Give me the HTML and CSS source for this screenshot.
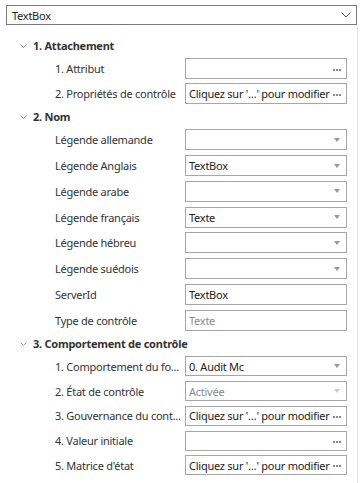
FILE: index.html
```html
<!DOCTYPE html>
<html>
<head>
    <meta charset="UTF-8">
    <title>Propriétés</title>
    <link rel="stylesheet" href="styles.css">
</head>
<body>
    <div class="picker">
        <span>TextBox</span>
        <svg width="10" height="6" viewBox="0 0 10 6"><polyline points="0.5,0.5 5,5 9.5,0.5" fill="none" stroke="#555" stroke-width="1"/></svg>
    </div>

    <div class="grid">
        <!-- 1. Attachement -->
        <div class="group-head">
            <svg class="caret" width="7" height="4" viewBox="0 0 7 4"><polyline points="0.5,0.5 3.5,3.5 6.5,0.5" fill="none" stroke="#999" stroke-width="1"/></svg>
            1. Attachement
        </div>
        <div class="group g1">
            <div class="row">
                <div class="label">1. Attribut</div>
                <div class="field"><span></span><i class="dots"></i></div>
            </div>
            <div class="row">
                <div class="label">2. Propriétés de contrôle</div>
                <div class="field"><span>Cliquez sur '…' pour modifier</span><i class="dots"></i></div>
            </div>
        </div>

        <!-- 2. Nom -->
        <div class="group-head">
            <svg class="caret" width="7" height="4" viewBox="0 0 7 4"><polyline points="0.5,0.5 3.5,3.5 6.5,0.5" fill="none" stroke="#999" stroke-width="1"/></svg>
            2. Nom
        </div>
        <div class="group g2">
            <div class="row">
                <div class="label">Légende allemande</div>
                <div class="field"><span></span><i class="arrow"></i></div>
            </div>
            <div class="row">
                <div class="label">Légende Anglais</div>
                <div class="field"><span>TextBox</span><i class="arrow"></i></div>
            </div>
            <div class="row">
                <div class="label">Légende arabe</div>
                <div class="field"><span></span><i class="arrow"></i></div>
            </div>
            <div class="row">
                <div class="label">Légende français</div>
                <div class="field"><span>Texte</span><i class="arrow"></i></div>
            </div>
            <div class="row">
                <div class="label">Légende hébreu</div>
                <div class="field"><span></span><i class="arrow"></i></div>
            </div>
            <div class="row">
                <div class="label">Légende suédois</div>
                <div class="field"><span></span><i class="arrow"></i></div>
            </div>
            <div class="row">
                <div class="label">ServerId</div>
                <div class="field"><span>TextBox</span></div>
            </div>
            <div class="row">
                <div class="label">Type de contrôle</div>
                <div class="field disabled"><span>Texte</span></div>
            </div>
        </div>

        <!-- 3. Comportement de contrôle -->
        <div class="group-head">
            <svg class="caret" width="7" height="4" viewBox="0 0 7 4"><polyline points="0.5,0.5 3.5,3.5 6.5,0.5" fill="none" stroke="#999" stroke-width="1"/></svg>
            3. Comportement de contrôle
        </div>
        <div class="group g3">
            <div class="row">
                <div class="label">1. Comportement du fo...</div>
                <div class="field"><span>0. Audit Mc</span><i class="arrow"></i></div>
            </div>
            <div class="row">
                <div class="label">2. État de contrôle</div>
                <div class="field disabled"><span>Activée</span><i class="arrow"></i></div>
            </div>
            <div class="row">
                <div class="label">3. Gouvernance du cont...</div>
                <div class="field"><span>Cliquez sur '…' pour modifier</span><i class="dots"></i></div>
            </div>
            <div class="row">
                <div class="label">4. Valeur initiale</div>
                <div class="field"><span></span><i class="dots"></i></div>
            </div>
            <div class="row">
                <div class="label">5. Matrice d'état</div>
                <div class="field"><span>Cliquez sur '…' pour modifier</span><i class="dots"></i></div>
            </div>
        </div>
    </div>
</body>
</html>
```

FILE: styles.css
```css
html,
body {
    margin: 0;
    padding: 0;
    height: 100%;
}

body {
    background: #fff;
    color: #333;
    font-family: "Noto Sans", "Open Sans", sans-serif;
    font-size: 11px;
    letter-spacing: -0.25px;
    overflow: hidden;
}

.picker {
    margin: 5px 0 0 6px;
    width: 351px;
    height: 20px;
    box-sizing: border-box;
    border: 1px solid #7a7a7a;
    display: flex;
    align-items: center;
    justify-content: space-between;
    padding: 0 5px 0 5px;
    color: #222;
}

.grid {
    margin-top: 3px;
    padding-top: 7px;
    width: 358px;
    height: calc(100% - 28px);
    box-sizing: border-box;
    border-right: 1px solid #e2e2e2;
}

.group-head {
    height: 21px;
    display: flex;
    align-items: center;
    padding-left: 20px;
    font-weight: bold;
    color: #333;
}

.group-head .caret {
    margin-right: 6px;
}

.row {
    display: flex;
    align-items: center;
    height: 25px;
}

.g2 .row {
    height: 25.75px;
}

.g3 .row {
    height: 24.75px;
}

.label {
    width: 185px;
    box-sizing: border-box;
    padding-left: 55px;
    white-space: nowrap;
}

.field {
    width: 162px;
    height: 21px;
    box-sizing: border-box;
    border: 1px solid #a6a6a6;
    display: flex;
    align-items: center;
    justify-content: space-between;
    padding: 0 5px 0 3px;
    color: #222;
    white-space: nowrap;
}

.g3 .field {
    height: 20px;
}

.field.disabled {
    color: #8a8a8a;
}

.dots {
    width: 8px;
    height: 2px;
    background:
        linear-gradient(#888, #888) 0 0 / 2px 2px no-repeat,
        linear-gradient(#888, #888) 3px 0 / 2px 2px no-repeat,
        linear-gradient(#888, #888) 6px 0 / 2px 2px no-repeat;
    margin-top: 2px;
}

.arrow {
    width: 0;
    height: 0;
    border-left: 3.5px solid transparent;
    border-right: 3.5px solid transparent;
    border-top: 4px solid #999;
    margin-right: 1px;
}

.disabled .arrow {
    border-top-color: #ccc;
}
```
